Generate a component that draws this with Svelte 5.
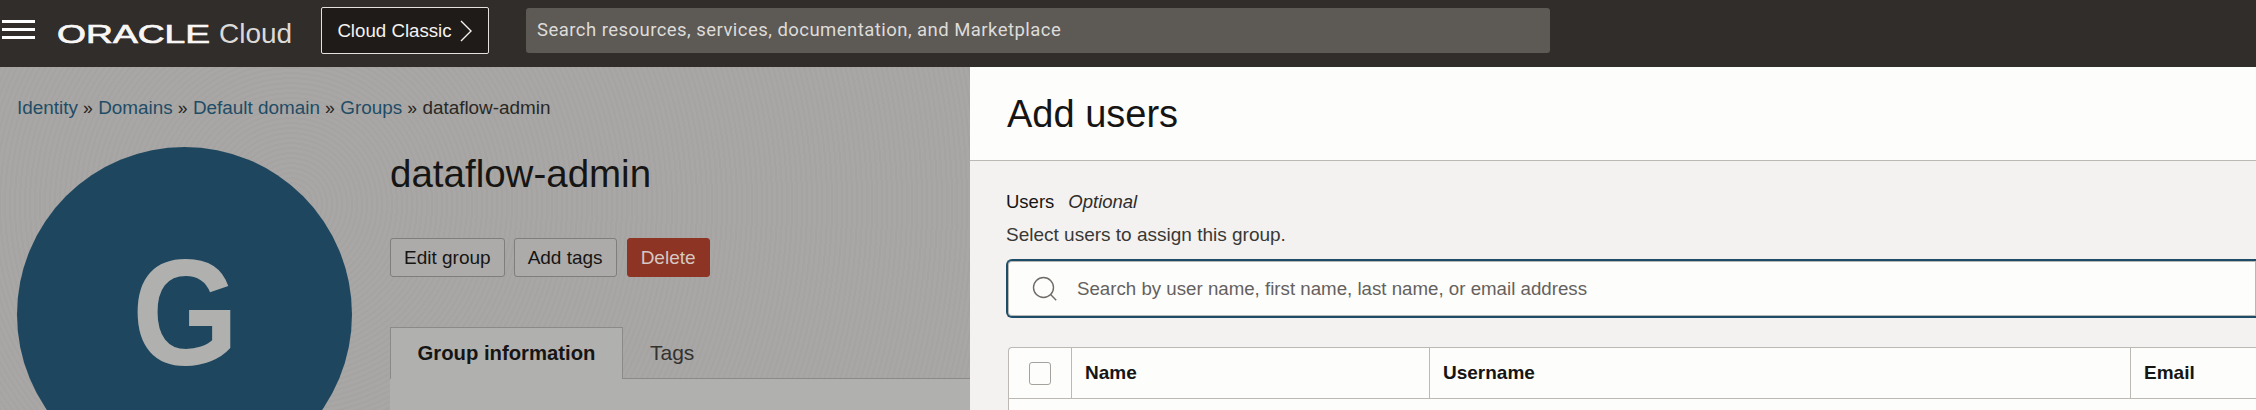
<script>
  const crumbs = ['Identity', 'Domains', 'Default domain', 'Groups'];
</script>

<div class="page">
  <header class="topbar">
    <button class="burger" aria-label="Menu"><span></span><span></span><span></span></button>
    <div class="brand"><span class="oracle">ORACLE</span><span class="cloud">Cloud</span></div>
    <button class="classic">Cloud Classic
      <svg width="14" height="24" viewBox="0 0 14 24"><path d="M2 2l10 10L2 22" fill="none" stroke="#f4f3f1" stroke-width="1.4"/></svg>
    </button>
    <div class="topsearch">Search resources, services, documentation, and Marketplace</div>
  </header>

  <div class="body">
    <main class="left">
      <nav class="crumbs">
        {#each crumbs as c}
          <a href="#top">{c}</a><span class="sep">»</span>
        {/each}
        <span class="current">dataflow-admin</span>
      </nav>
      <div class="detail">
        <div class="avatar"><span>G</span></div>
        <div class="info">
          <h1>dataflow-admin</h1>
          <div class="actions">
            <button class="btn">Edit group</button>
            <button class="btn tags">Add tags</button>
            <button class="btn danger">Delete</button>
          </div>
          <div class="tabs">
            <div class="tab active">Group information</div>
            <div class="tab">Tags</div>
          </div>
          <div class="tabpane"></div>
        </div>
      </div>
    </main>

    <aside class="panel">
      <div class="panel-head"><h2>Add users</h2></div>
      <div class="panel-body">
        <div class="label"><span>Users</span><em>Optional</em></div>
        <p class="hint">Select users to assign this group.</p>
        <div class="search">
          <svg width="26" height="26" viewBox="0 0 26 26"><circle cx="11.5" cy="11.5" r="10" fill="none" stroke="#6f6b67" stroke-width="1.4"/><path d="M18.6 18.6l5.6 5.6" stroke="#6f6b67" stroke-width="1.4"/></svg>
          <span>Search by user name, first name, last name, or email address</span>
        </div>
        <div class="table">
          <div class="th check"><span class="box"></span></div>
          <div class="th">Name</div>
          <div class="th">Username</div>
          <div class="th">Email</div>
        </div>
      </div>
    </aside>
  </div>
</div>

<style>
  :global(body) { margin: 0; background: #a8a7a5; }
  .page {
    width: 2256px; height: 410px; overflow: hidden;
    font-family: "Liberation Sans", Arial, sans-serif;
  }
  button { font-family: inherit; cursor: pointer; }
  h1, h2, p { margin: 0; font-weight: 400; }

  .topbar {
    height: 67px; box-sizing: border-box; background: #312d2a;
    display: flex; align-items: center;
  }
  .burger {
    width: 33px; margin: -9px 0 0 2px; padding: 0; background: none; border: 0;
    display: flex; flex-direction: column; gap: 5px;
  }
  .burger span { display: block; height: 3px; background: #fff; }
  .brand { margin-left: 22px; display: flex; align-items: baseline; color: #f8f7f5; width: 264px; }
  .oracle {
    font-size: 25px; line-height: 27px; font-weight: 400;
    transform: scaleX(1.49); transform-origin: 0 50%; width: 162px;
    -webkit-text-stroke: .7px #f8f7f5;
  }
  .cloud { font-size: 28px; font-weight: 400; color: #dcdad8; }
  .classic {
    width: 168px; height: 47px; box-sizing: border-box; margin-top: -6px;
    background: #1f1b18; color: #f4f3f1; border: 1px solid #e4e2df; border-radius: 2px;
    font-size: 18.7px; display: flex; align-items: center; justify-content: center; gap: 7px; padding: 0;
  }
  .topsearch {
    width: 1024px; height: 45px; margin-left: 37px; margin-top: -7px; border-radius: 3px;
    background: #5d5955; color: #dedcd9; font-family: Roboto, sans-serif; font-size: 18.5px; letter-spacing: .46px;
    display: flex; align-items: center; padding-left: 11px; box-sizing: border-box;
  }

  .body { display: flex; height: 343px; }
  .left {
    width: 970px; flex: none; overflow: hidden; color: #161513;
    background-color: #a8a7a5;
    background-image: repeating-radial-gradient(circle at 30% 40%, rgba(0,0,0,.018) 0 2px, transparent 2px 5px);
  }
  .crumbs { padding: 30px 0 0 17px; height: 50px; box-sizing: border-box; font-size: 18.9px; line-height: 22px; display: flex; }
  .crumbs a { color: #1f4c66; text-decoration: none; }
  .sep { margin: 0 5.5px 0 5px; color: #262421; font-size: 17.5px; }
  .current { color: #2a2825; }
  .detail { display: flex; padding: 30px 0 0 17px; }
  .avatar {
    width: 335px; height: 335px; border-radius: 50%; flex: none; background: #1e475f; color: #b0b0af;
    display: flex; align-items: center; justify-content: center; font-size: 150px; font-weight: 700;
  }
  .avatar span { transform: scaleX(.915); margin: 0 0 3px 2px; }
  .info { margin-left: 38px; flex: 1; }
  h1 { font-size: 38.5px; line-height: 46px; margin-top: 4px; }
  .actions { display: flex; gap: 9px; margin-top: 41px; }
  .btn {
    height: 39px; padding: 0 13px; box-sizing: border-box; font-size: 19px; color: #161513;
    background: #acabaa; border: 1px solid #807e7c; border-radius: 3px;
  }
  .tags { margin-right: 1px; }
  .danger { background: #8d3424; border-color: #8d3424; color: #d6c8c2; }
  .tabs { display: flex; margin-top: 50px; border-bottom: 1px solid #8b8a88; height: 51px; }
  .tab { font-size: 21px; padding: 0 27px; line-height: 51px; color: #34322f; }
  .active {
    width: 233px; box-sizing: border-box; height: 52px; padding: 0; text-align: center; font-weight: 700; font-size: 20.3px; color: #161513;
    background: #b0b0af; border: 1px solid #8b8a88; border-bottom: 0;
  }
  .tabpane { height: 60px; background: #b0b0af; }

  .panel { flex: 1; background: #f3f2f1; color: #161513; min-width: 0; }
  .panel-head {
    height: 94px; box-sizing: border-box; background: #fdfdfc; border-bottom: 1px solid #bcb9b5;
    padding: 26px 0 0 37px;
  }
  h2 { font-size: 38px; line-height: 42px; }
  .panel-body { padding: 30px 0 0 36px; }
  .label { font-size: 18.5px; line-height: 22px; display: flex; gap: 14px; }
  .label em { color: #2f2d2a; }
  .hint { font-size: 19px; line-height: 22px; margin-top: 11px; color: #3a3835; }
  .search {
    margin-top: 13px; height: 59px; box-sizing: border-box; background: #fdfdfc;
    border: 2px solid #1e4d68; border-right: 0; border-radius: 6px 0 0 6px;
    box-shadow: inset 0 0 0 1px #b9b7b4;
    display: flex; align-items: center; padding-left: 24px; gap: 19px;
    font-size: 18.7px; color: #65615d;
  }
  .table {
    margin: 29px 0 0 2px; height: 90px; box-sizing: border-box; background: #fdfdfc;
    border: 1px solid #bcb9b5; border-right: 0; border-radius: 4px 0 0 0;
    display: grid; grid-template-columns: 63px 358px 701px 1fr; grid-template-rows: 51px;
    border-bottom: 0;
  }
  .th {
    font-size: 19px; font-weight: 700; padding-left: 13px; display: flex; align-items: center;
    border-right: 1px solid #bcb9b5; border-bottom: 1px solid #bcb9b5; color: #161513;
  }
  .th:last-child { border-right: 0; }
  .check { padding-left: 20px; }
  .box { width: 20px; height: 21px; border: 1px solid #a5a29e; border-radius: 3px; background: #fdfdfc; }
</style>
